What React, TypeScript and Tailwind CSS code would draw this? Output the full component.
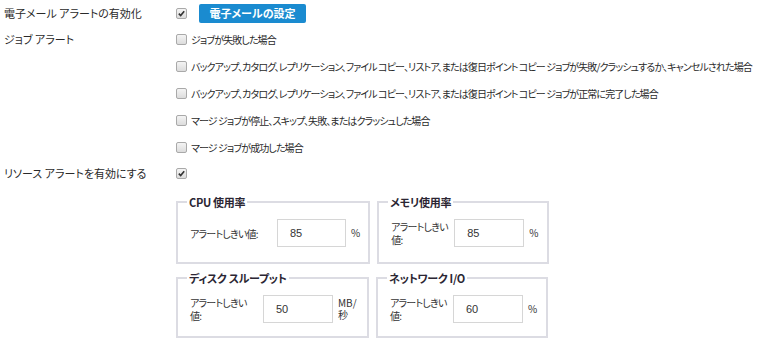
import React from "react";

const jp = "[font-family:'Noto_Sans_CJK_JP','Noto_Sans',sans-serif] [font-feature-settings:'palt']";

function Check({ checked = false }: { checked?: boolean }) {
  return (
    <span className="inline-flex items-center justify-center size-[11px] shrink-0 rounded-[2px] border border-[#a9a9a9] bg-gradient-to-b from-[#f4f4f4] to-[#dcdcdc]">
      {checked && (
        <svg viewBox="0 0 10 10" className="size-[9px]">
          <path d="M2 5.2 L4.1 7.3 L8 2.6" fill="none" stroke="#333" strokeWidth="1.8" />
        </svg>
      )}
    </span>
  );
}

const jobItems = [
  "ジョブが失敗した場合",
  "バックアップ、カタログ、レプリケーション、ファイル コピー、リストア、または復日ポイント コピー ジョブが失敗/クラッシュするか、キャンセルされた場合",
  "バックアップ、カタログ、レプリケーション、ファイル コピー、リストア、または復日ポイント コピー ジョブが正常に完了した場合",
  "マージ ジョブが停止、スキップ、失敗、またはクラッシュした場合",
  "マージ ジョブが成功した場合",
];

function Box({
  title,
  width,
  height,
  labelW,
  wrap,
  value,
  unit,
  inputW,
}: {
  title: string;
  width: string;
  height: string;
  labelW: string;
  wrap: boolean;
  value: string;
  unit: React.ReactNode;
  inputW: string;
}) {
  return (
    <fieldset className={`${width} ${height} border-2 border-[#dcdce3] pl-[12px] pr-2 pt-[11px]`}>
      <legend className="ml-[-3px] px-[2px] text-[11px] font-bold leading-[12px] text-[#2b2633] tracking-[-0.3px]">{title}</legend>
      <div className="flex items-center">
        <div className={`${labelW} shrink-0 whitespace-nowrap text-[10px] tracking-[-0.8px] leading-[13px] text-[#333]`}>
          {wrap ? (
            <>
              アラートしきい
              <br />
              値:
            </>
          ) : (
            "アラートしきい値:"
          )}
        </div>
        <div className={`${inputW} shrink-0 h-[28px] border border-[#d6d6d6] bg-white pl-[12px] text-[11px] leading-[26px] text-[#333] [font-family:'Liberation_Sans',sans-serif]`}>
          {value}
        </div>
        <div className="ml-[5px] text-[10px] leading-[12px] text-[#333]">{unit}</div>
      </div>
    </fieldset>
  );
}

export default function App() {
  return (
    <div className={`w-[777px] h-[351px] bg-white text-[#2a2a2a] text-[11px] ${jp}`}>
      <div className="flex items-center h-[25px] pt-[1px] pl-[4px]">
        <div className="w-[172px] shrink-0">電子メール アラートの有効化</div>
        <Check checked />
        <button className="ml-[12px] w-[107px] h-[19px] rounded-[2px] bg-[#1a8bd0] text-white text-[11px] font-bold leading-none">
          電子メールの設定
        </button>
      </div>
      <div className="flex pl-[4px] pt-[7px]">
        <div className="w-[172px] shrink-0 leading-[14px]">ジョブ アラート</div>
        <div className="flex flex-col gap-[13px]">
          {jobItems.map((t, i) => (
            <div key={i} className="flex items-center gap-[4px] h-[14px] whitespace-nowrap text-[10px] tracking-[-0.9px]">
              <Check />
              <span>{t}</span>
            </div>
          ))}
        </div>
      </div>
      <div className="flex items-center pl-[4px] pt-[12px]">
        <div className="w-[172px] shrink-0 leading-[14px]">リソース アラートを有効にする</div>
        <Check checked />
      </div>
      <div className="pl-[176px] pt-[16px] flex flex-col gap-[8px]">
        <div className="flex gap-[7px]">
          <Box title="CPU 使用率" width="w-[193px]" height="h-[68px]" labelW="w-[87px]" wrap={false} value="85" unit="%" inputW="w-[69px]" />
          <Box title="メモリ使用率" width="w-[172px]" height="h-[68px]" labelW="w-[63px]" wrap value="85" unit="%" inputW="w-[70px]" />
        </div>
        <div className="flex gap-[7px]">
          <Box
            title="ディスク スループット"
            width="w-[193px]"
            height="h-[66px]"
            labelW="w-[73px]"
            wrap
            value="50"
            unit={
              <>
                MB/
                <br />秒
              </>
            }
            inputW="w-[70px]"
          />
          <Box title="ネットワーク I/O" width="w-[172px]" height="h-[66px]" labelW="w-[63px]" wrap value="60" unit="%" inputW="w-[70px]" />
        </div>
      </div>
    </div>
  );
}
